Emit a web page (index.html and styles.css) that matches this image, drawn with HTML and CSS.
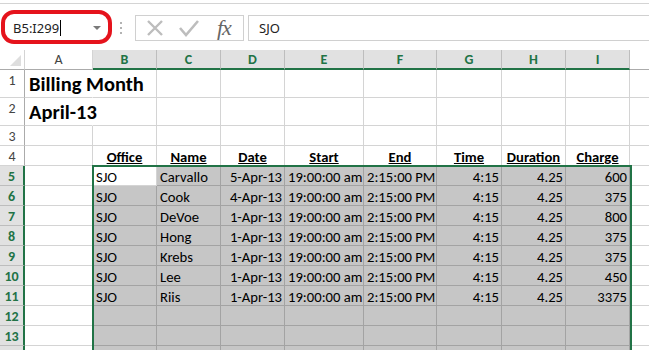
FILE: index.html
```html
<!DOCTYPE html>
<html lang="en">
<head>
    <meta charset="UTF-8">
    <title>Billing Month</title>
    <link rel="stylesheet" href="styles.css">
</head>
<body>
    <div class="ribbon-edge"></div>

    <!-- Formula bar -->
    <div class="formula-bar">
        <div class="name-box">
            <span class="name-text">B5:I299</span><span class="caret"></span>
            <span class="drop"></span>
        </div>
        <svg class="grip" width="4" height="14" viewBox="0 0 4 14">
            <circle cx="2" cy="2" r="1" fill="#9a9a9a"/>
            <circle cx="2" cy="7" r="1" fill="#9a9a9a"/>
            <circle cx="2" cy="12" r="1" fill="#9a9a9a"/>
        </svg>
        <div class="fx-buttons">
            <svg class="btn-icon" width="20" height="20" viewBox="0 0 20 20">
                <path d="M3 3 L17 17 M17 3 L3 17" stroke="#bdbdbd" stroke-width="2.4" fill="none"/>
            </svg>
            <svg class="btn-icon" width="22" height="20" viewBox="0 0 22 20">
                <path d="M2 10 L8 17 L20 3" stroke="#bdbdbd" stroke-width="2.6" fill="none"/>
            </svg>
            <span class="fx">fx</span>
        </div>
        <div class="formula-input">SJO</div>
        <div class="callout"></div>
    </div>

    <!-- Sheet -->
    <div class="sheet">
        <div class="corner">
            <svg width="25" height="19" viewBox="0 0 25 19">
                <polygon points="21,5 21,16 10,16" fill="#dedede"/>
            </svg>
        </div>
        <div class="ch">A</div>
        <div class="ch on">B</div>
        <div class="ch on">C</div>
        <div class="ch on">D</div>
        <div class="ch on">E</div>
        <div class="ch on">F</div>
        <div class="ch on">G</div>
        <div class="ch on">H</div>
        <div class="ch on">I</div>
        <div class="ch">J</div>

        <div class="rh">1</div>
        <div class="c spill title">Billing Month</div>
        <div class="c"></div><div class="c"></div><div class="c"></div><div class="c"></div>
        <div class="c"></div><div class="c"></div><div class="c"></div><div class="c"></div><div class="c"></div>

        <div class="rh">2</div>
        <div class="c spill title">April-13</div>
        <div class="c"></div><div class="c"></div><div class="c"></div><div class="c"></div>
        <div class="c"></div><div class="c"></div><div class="c"></div><div class="c"></div><div class="c"></div>

        <div class="rh">3</div>
        <div class="c"></div><div class="c"></div><div class="c"></div><div class="c"></div><div class="c"></div>
        <div class="c"></div><div class="c"></div><div class="c"></div><div class="c"></div><div class="c"></div>

        <div class="rh">4</div>
        <div class="c"></div>
        <div class="c hd"><u>Office</u></div>
        <div class="c hd"><u>Name</u></div>
        <div class="c hd"><u>Date</u></div>
        <div class="c hd"><u>Start</u></div>
        <div class="c hd"><u>End</u></div>
        <div class="c hd"><u>Time</u></div>
        <div class="c hd"><u>Duration</u></div>
        <div class="c hd"><u>Charge</u></div>
        <div class="c"></div>

        <div class="rh on">5</div>
        <div class="c"></div>
        <div class="c">SJO</div>
        <div class="c sel">Carvallo</div>
        <div class="c sel r">5-Apr-13</div>
        <div class="c sel r">19:00:00 am</div>
        <div class="c sel r">2:15:00 PM</div>
        <div class="c sel r">4:15</div>
        <div class="c sel r">4.25</div>
        <div class="c sel r">600</div>
        <div class="c"></div>

        <div class="rh on">6</div>
        <div class="c"></div>
        <div class="c sel">SJO</div>
        <div class="c sel">Cook</div>
        <div class="c sel r">4-Apr-13</div>
        <div class="c sel r">19:00:00 am</div>
        <div class="c sel r">2:15:00 PM</div>
        <div class="c sel r">4:15</div>
        <div class="c sel r">4.25</div>
        <div class="c sel r">375</div>
        <div class="c"></div>

        <div class="rh on">7</div>
        <div class="c"></div>
        <div class="c sel">SJO</div>
        <div class="c sel">DeVoe</div>
        <div class="c sel r">1-Apr-13</div>
        <div class="c sel r">19:00:00 am</div>
        <div class="c sel r">2:15:00 PM</div>
        <div class="c sel r">4:15</div>
        <div class="c sel r">4.25</div>
        <div class="c sel r">800</div>
        <div class="c"></div>

        <div class="rh on">8</div>
        <div class="c"></div>
        <div class="c sel">SJO</div>
        <div class="c sel">Hong</div>
        <div class="c sel r">1-Apr-13</div>
        <div class="c sel r">19:00:00 am</div>
        <div class="c sel r">2:15:00 PM</div>
        <div class="c sel r">4:15</div>
        <div class="c sel r">4.25</div>
        <div class="c sel r">375</div>
        <div class="c"></div>

        <div class="rh on">9</div>
        <div class="c"></div>
        <div class="c sel">SJO</div>
        <div class="c sel">Krebs</div>
        <div class="c sel r">1-Apr-13</div>
        <div class="c sel r">19:00:00 am</div>
        <div class="c sel r">2:15:00 PM</div>
        <div class="c sel r">4:15</div>
        <div class="c sel r">4.25</div>
        <div class="c sel r">375</div>
        <div class="c"></div>

        <div class="rh on">10</div>
        <div class="c"></div>
        <div class="c sel">SJO</div>
        <div class="c sel">Lee</div>
        <div class="c sel r">1-Apr-13</div>
        <div class="c sel r">19:00:00 am</div>
        <div class="c sel r">2:15:00 PM</div>
        <div class="c sel r">4:15</div>
        <div class="c sel r">4.25</div>
        <div class="c sel r">450</div>
        <div class="c"></div>

        <div class="rh on">11</div>
        <div class="c"></div>
        <div class="c sel">SJO</div>
        <div class="c sel">Riis</div>
        <div class="c sel r">1-Apr-13</div>
        <div class="c sel r">19:00:00 am</div>
        <div class="c sel r">2:15:00 PM</div>
        <div class="c sel r">4:15</div>
        <div class="c sel r">4.25</div>
        <div class="c sel r">3375</div>
        <div class="c"></div>

        <div class="rh on">12</div>
        <div class="c"></div>
        <div class="c sel"></div><div class="c sel"></div><div class="c sel"></div><div class="c sel"></div>
        <div class="c sel"></div><div class="c sel"></div><div class="c sel"></div><div class="c sel"></div>
        <div class="c"></div>

        <div class="rh on">13</div>
        <div class="c"></div>
        <div class="c sel"></div><div class="c sel"></div><div class="c sel"></div><div class="c sel"></div>
        <div class="c sel"></div><div class="c sel"></div><div class="c sel"></div><div class="c sel"></div>
        <div class="c"></div>

        <div class="rh on">14</div>
        <div class="c"></div>
        <div class="c sel"></div><div class="c sel"></div><div class="c sel"></div><div class="c sel"></div>
        <div class="c sel"></div><div class="c sel"></div><div class="c sel"></div><div class="c sel"></div>
        <div class="c"></div>

        <!-- selection outline B5:I299, drawn over the cells -->
        <div class="sel-box"></div>
    </div>
</body>
</html>
```

FILE: styles.css
```css
/* Spreadsheet window */
body {
    margin: 0;
    width: 649px;
    height: 350px;
    overflow: hidden;
    background-color: #fff;
    font-family: Carlito, Lato, sans-serif;
    color: #000;
}

.ribbon-edge {
    height: 3px;
    border-bottom: 1px solid #d4d4d4;
}

/* Formula bar */
.formula-bar {
    position: relative;
    display: flex;
    align-items: flex-start;
    height: 46px;
    padding-top: 11px;
    box-sizing: border-box;
    font-family: "Noto Sans", "Open Sans", sans-serif;
    font-size: 13px;
    color: #222;
}

.name-box {
    position: relative;
    display: flex;
    align-items: center;
    width: 97px;
    height: 26px;
    margin-left: 8px;
    padding-left: 5px;
    box-sizing: border-box;
}

.caret {
    display: inline-block;
    width: 1px;
    height: 16px;
    margin-left: 1px;
    background-color: #000;
}

.drop {
    position: absolute;
    right: 4px;
    top: 11px;
    border-top: 4px solid #7a7a7a;
    border-left: 4px solid transparent;
    border-right: 4px solid transparent;
}

.grip {
    margin: 6px 0 0 14px;
}

.fx-buttons {
    display: flex;
    align-items: center;
    width: 109px;
    height: 26px;
    margin-left: 12px;
    padding-left: 9px;
    box-sizing: border-box;
    border: 1px solid #d0d0d0;
}

.btn-icon {
    margin-right: 13px;
}

.fx {
    margin-left: 4px;
    font-family: "Liberation Serif", "DejaVu Serif", serif;
    font-style: italic;
    font-size: 22px;
    line-height: 22px;
    color: #666;
    letter-spacing: -1px;
}

.formula-input {
    flex: 1;
    height: 26px;
    margin-left: 4px;
    padding-left: 10px;
    line-height: 24px;
    box-sizing: border-box;
    border: 1px solid #d0d0d0;
    border-right: none;
}

/* red annotation ring around the name box */
.callout {
    position: absolute;
    left: 1px;
    top: 6px;
    width: 111px;
    height: 34px;
    box-sizing: border-box;
    border: 4px solid #e5131c;
    border-radius: 13px;
}

/* Grid */
.sheet {
    position: relative;
    display: grid;
    grid-template-columns: 25px 68px 64px 64px 64px 79px 73px 65px 64px 64px 64px;
    grid-template-rows: 20px 28px 28px 20px 20px repeat(10, 20px);
    width: 694px;
}

.sheet > div {
    box-sizing: border-box;
}

.corner {
    border-right: 1px solid #d4d4d4;
    border-bottom: 1px solid #ababab;
}

.corner svg {
    display: block;
}

.ch {
    text-align: center;
    font-size: 14px;
    line-height: 20px;
    color: #444;
    border-right: 1px solid #d4d4d4;
    border-bottom: 1px solid #ababab;
}

.ch.on {
    background-color: #e1e1e1;
    color: #217346;
    font-weight: bold;
    border-right-color: #bdbdbd;
    border-bottom: 2px solid #217346;
}

.rh {
    text-align: center;
    font-size: 14px;
    padding-top: 2px;
    line-height: 18px;
    color: #444;
    border-right: 1px solid #ababab;
    border-bottom: 1px solid #d4d4d4;
}

.rh.on {
    background-color: #e1e1e1;
    color: #217346;
    font-weight: bold;
    border-right: 2px solid #217346;
    border-bottom-color: #bdbdbd;
}

.c {
    padding: 2px 3px 0;
    font-size: 14.67px;
    line-height: 18px;
    white-space: nowrap;
    overflow: hidden;
    border-right: 1px solid #d4d4d4;
    border-bottom: 1px solid #d4d4d4;
}

.c.r {
    text-align: right;
    padding-right: 2px;
}

.c.hd {
    text-align: center;
    font-weight: bold;
}

.c.sel {
    background-color: #c6c6c6;
    border-color: #a3a3a3;
}

.c.spill {
    overflow: visible;
    border-right-color: transparent;
}

.c.title {
    padding: 2px 4px 0;
    font-size: 20.5px;
    font-weight: bold;
    line-height: 25px;
}

.sel-box {
    position: absolute;
    grid-column: 3 / 11;
    grid-row: 6 / 16;
    top: -1px;
    left: -1px;
    right: -2px;
    bottom: 0;
    border: 2px solid #217346;
    pointer-events: none;
    z-index: 2;
}
```
